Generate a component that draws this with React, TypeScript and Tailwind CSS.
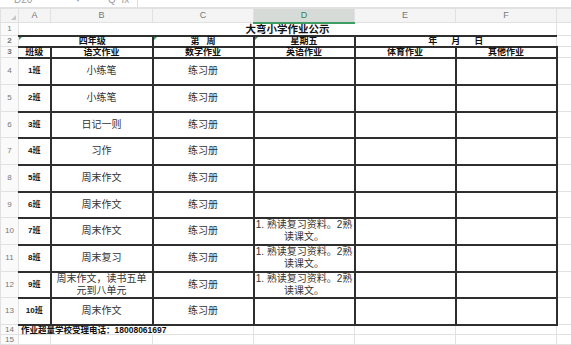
import { FC, ReactNode } from "react";

type Side = "t" | "r" | "b";

//Bold border per side (full class names so Tailwind sees them)
const BOLD: Record<Side, string> = {
  t: "border-t-2 border-t-[#2e2e2e]",
  r: "border-r-2 border-r-[#2e2e2e]",
  b: "border-b-2 border-b-[#2e2e2e]",
};

const bold = (sides: Side[]) => sides.map((s) => BOLD[s]).join(" ");

const LIGHT = "border border-[#e1e1e1]";

const RowHead: FC<{ n: number }> = ({ n }) => (
  <td className={`${LIGHT} bg-[#fafafa] text-center text-[8px] leading-none text-[#777]`}>{n}</td>
);

const Mark: FC = () => (
  <span className="absolute left-0 top-0 h-0 w-0 border-t-[3px] border-r-[3px] border-t-[#3c9a5f] border-r-transparent" />
);

const Cell: FC<{
  children?: ReactNode;
  span?: number;
  sides?: Side[];
  cls?: string;
  mark?: boolean;
}> = ({ children, span, sides = [], cls = "", mark }) => (
  <td colSpan={span} className={`${LIGHT} ${bold(sides)} relative p-0 text-center align-middle ${cls}`}>
    {mark && <Mark />}
    {children}
  </td>
);

const CLASSES: { b: ReactNode; d?: boolean }[] = [
  { b: "小练笔" },
  { b: "小练笔" },
  { b: "日记一则" },
  { b: "习作" },
  { b: "周末作文" },
  { b: "周末作文" },
  { b: "周末作文", d: true },
  { b: "周末复习", d: true },
  {
    b: (
      <>
        <div className="whitespace-nowrap">周末作文，读书五单</div>
        <div className="whitespace-nowrap">元到八单元</div>
      </>
    ),
    d: true,
  },
  { b: "周末作文" },
];

const HEIGHTS = [27, 27, 26, 27, 27, 26, 27, 27, 26, 27];

const App: FC = () => {
  return (
    <div className="h-[345px] w-[571px] overflow-hidden bg-white font-['Liberation_Sans','Noto_Sans_CJK_SC',sans-serif] text-[#333]">
      {/* Formula bar, mostly scrolled out of view */}
      <div className="h-[8px] overflow-hidden border-b border-[#e2e2e2]">
        <div className="-mt-[8px] flex h-[15px] items-center text-[10px] text-[#9a9a9a]">
          <div className="flex w-[84px] items-center justify-between pl-[14px] pr-[4px]">
            <span>D20</span>
            <span className="text-[8px]">▾</span>
          </div>
          <div className="ml-[24px] flex w-[29px] items-center gap-[6px]">
            <span className="text-[10px]">Q</span>
            <span className="italic">fx</span>
          </div>
          <div className="h-full flex-1 border-l border-[#dcdcdc]" />
        </div>
      </div>

      <table className="w-[571px] table-fixed border-collapse text-[10px]">
        <colgroup>
          <col className="w-[18px]" />
          <col className="w-[32px]" />
          <col className="w-[102px]" />
          <col className="w-[101px]" />
          <col className="w-[101px]" />
          <col className="w-[101px]" />
          <col className="w-[101px]" />
          <col className="w-[15px]" />
        </colgroup>
        <tbody>
          {/* Column headers */}
          <tr className="h-[14px] bg-[#f4f4f4] text-[9px] leading-none text-[#777]">
            <td className={`${LIGHT} relative`}>
              <span className="absolute bottom-[2px] right-[2px] h-0 w-0 border-b-[5px] border-l-[5px] border-b-[#c8c8c8] border-l-transparent" />
            </td>
            <td className={`${LIGHT} text-center`}>A</td>
            <td className={`${LIGHT} text-center`}>B</td>
            <td className={`${LIGHT} text-center`}>C</td>
            <td className="border border-[#e1e1e1] border-b-2 border-b-[#3f9d63] bg-[#d6dbd8] text-center text-[#3d7f55]">D</td>
            <td className={`${LIGHT} text-center`}>E</td>
            <td className={`${LIGHT} text-center`}>F</td>
            <td className={LIGHT} />
          </tr>

          {/* Row 1: title */}
          <tr className="h-[13px]">
            <RowHead n={1} />
            <Cell span={6} cls="text-[10.5px] font-bold leading-none text-[#111]">
              大弯小学作业公示
            </Cell>
            <Cell />
          </tr>

          {/* Row 2 */}
          <tr className="h-[10px] text-[9px] font-bold leading-none text-[#111]">
            <RowHead n={2} />
            <Cell span={2} sides={["t", "r", "b"]} mark cls="pl-[14px]">
              四年级
            </Cell>
            <Cell sides={["t", "r", "b"]} mark>
              第<span className="inline-block w-[7px]" />周
            </Cell>
            <Cell sides={["t", "r", "b"]} mark>
              星期五
            </Cell>
            <Cell span={2} sides={["t", "b"]}>
              <span className="inline-flex gap-[14px]">
                <span>年</span>
                <span>月</span>
                <span>日</span>
              </span>
            </Cell>
            <Cell />
          </tr>

          {/* Row 3 */}
          <tr className="h-[10px] text-[9px] font-bold leading-none text-[#111]">
            <RowHead n={3} />
            <Cell sides={["r", "b"]}>班级</Cell>
            <Cell sides={["r", "b"]}>语文作业</Cell>
            <Cell sides={["r", "b"]}>数学作业</Cell>
            <Cell sides={["r", "b"]}>英语作业</Cell>
            <Cell sides={["r", "b"]}>体育作业</Cell>
            <Cell sides={["r", "b"]}>其他作业</Cell>
            <Cell />
          </tr>

          {/* Rows 4-13: classes */}
          {CLASSES.map((c, i) => (
            <tr key={i} style={{ height: HEIGHTS[i] }} className="leading-[12px]">
              <RowHead n={i + 4} />
              <Cell sides={["r", "b"]} cls="text-[8px] font-bold text-[#111]">
                {i + 1}班
              </Cell>
              <Cell sides={["r", "b"]}>{c.b}</Cell>
              <Cell sides={["r", "b"]}>练习册</Cell>
              <Cell sides={["r", "b"]}>
                {c.d && (
                  <>
                    <div className="whitespace-nowrap">1. 熟读复习资料。2熟</div>
                    <div className="whitespace-nowrap">读课文。</div>
                  </>
                )}
              </Cell>
              <Cell sides={["r", "b"]} />
              <Cell sides={["r", "b"]} />
              <Cell />
            </tr>
          ))}

          {/* Row 14: footer note */}
          <tr className="h-[10px]">
            <RowHead n={14} />
            <Cell span={3} cls="whitespace-nowrap pl-[2px] text-left text-[8.5px] font-bold leading-none text-[#111]">
              作业超量学校受理电话：18008061697
            </Cell>
            <Cell />
            <Cell />
            <Cell />
            <Cell />
          </tr>

          {[15, 16].map((n) => (
            <tr key={n} className="h-[10px]">
              <RowHead n={n} />
              <Cell />
              <Cell />
              <Cell />
              <Cell />
              <Cell />
              <Cell />
              <Cell />
            </tr>
          ))}
        </tbody>
      </table>
    </div>
  );
};

export default App;
